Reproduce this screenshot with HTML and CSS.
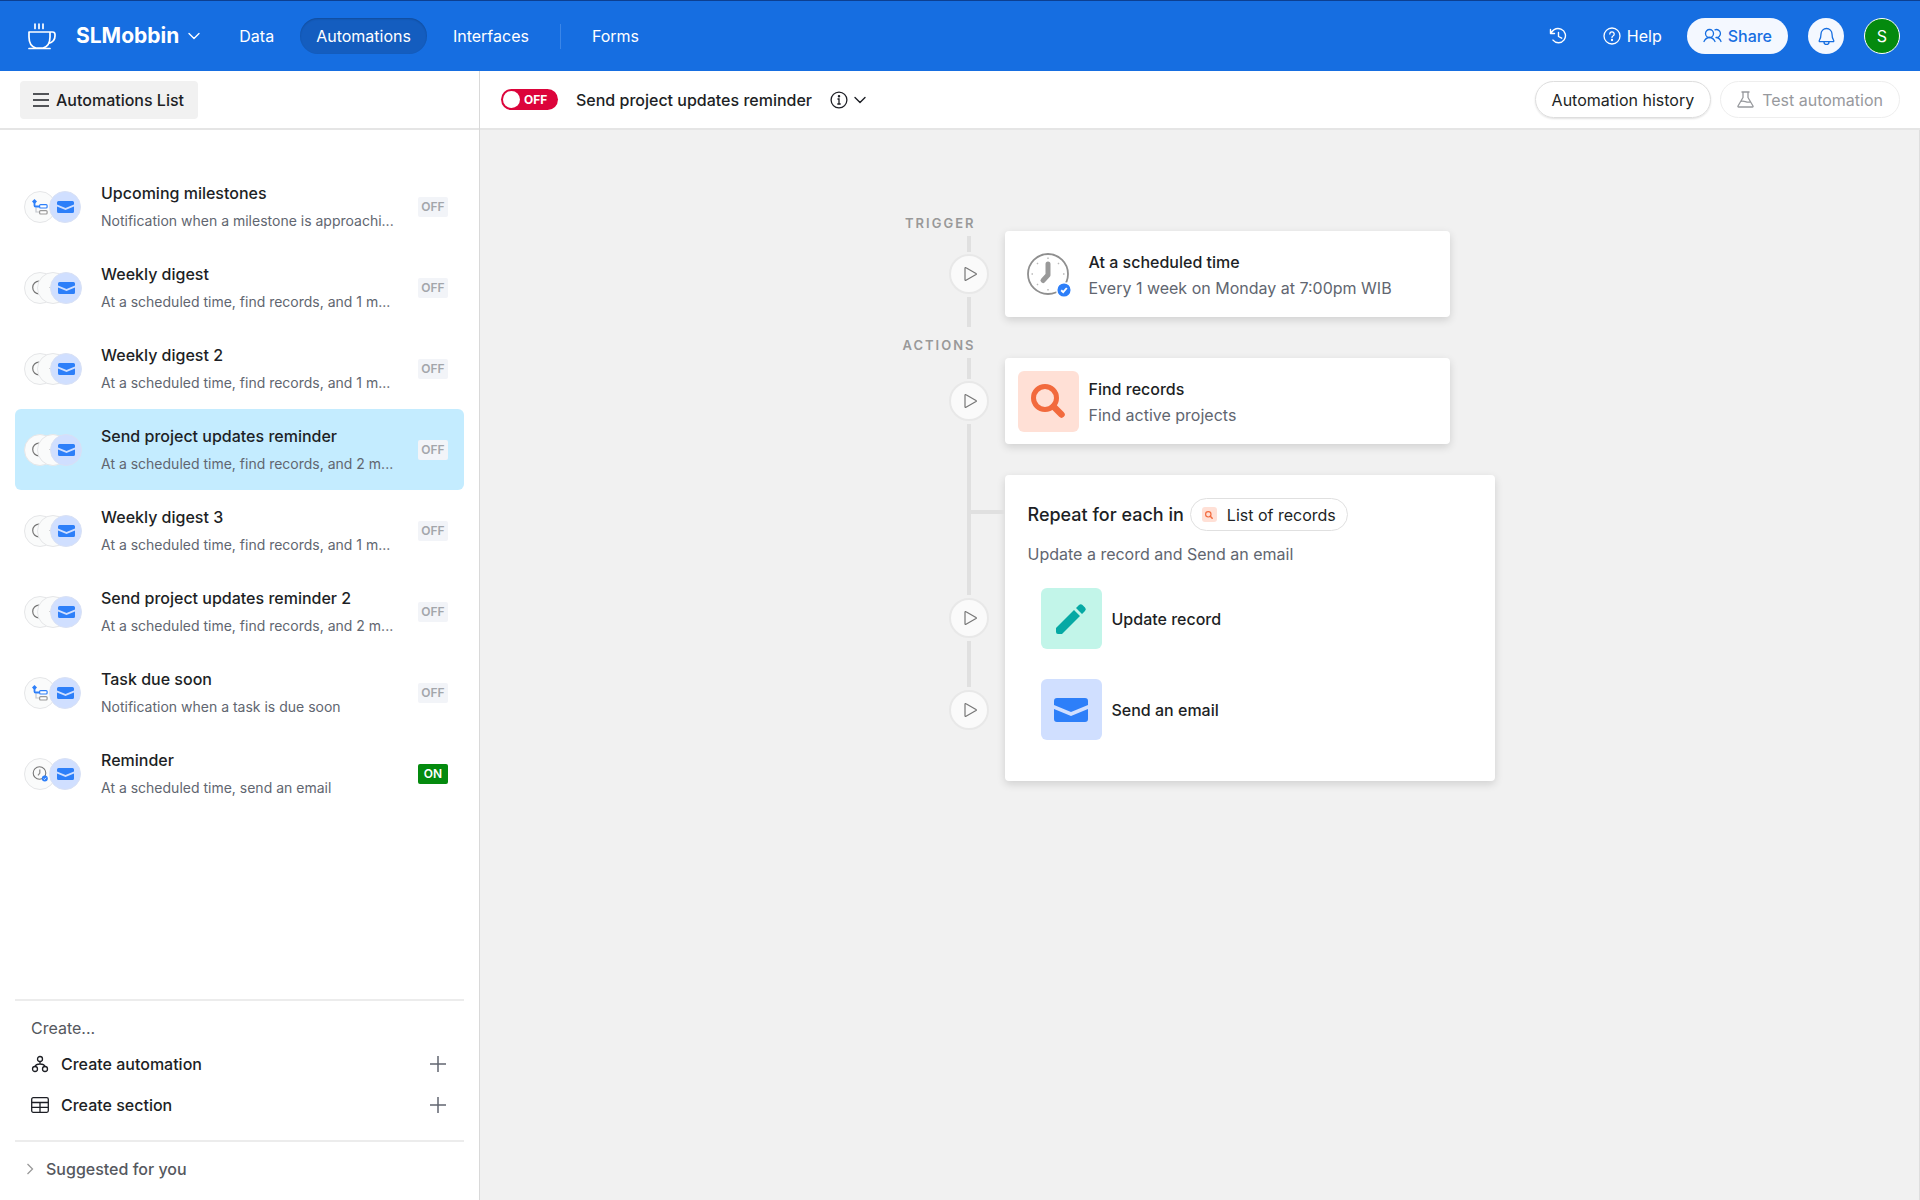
FILE: index.html
```html
<!DOCTYPE html>
<html lang="en">
<head>
    <meta charset="UTF-8">
    <meta name="viewport" content="width=device-width, initial-scale=1.0">
    <title>SLMobbin - Automations</title>
    <link rel="stylesheet" href="styles.css">
</head>
<body>
    <!-- shared icons -->
    <svg class="sprite" aria-hidden="true">
        <symbol id="chevron" viewBox="0 0 12 8"><path d="M1 1.5l5 5 5-5" fill="none" stroke="currentColor" stroke-width="1.4" stroke-linecap="round" stroke-linejoin="round"/></symbol>
        <symbol id="mail" viewBox="0 0 34 24"><path d="M3 0h28a3 3 0 0 1 3 3v4l-17 7L0 7V3a3 3 0 0 1 3-3zM0 11l17 7 17-7v10a3 3 0 0 1-3 3H3a3 3 0 0 1-3-3z" fill="currentColor"/></symbol>
        <symbol id="search" viewBox="0 0 34 34"><circle cx="14" cy="14" r="11.5" fill="none" stroke="currentColor" stroke-width="5"/><path d="M22.5 22.5l8 8" stroke="currentColor" stroke-width="6.5" stroke-linecap="round"/></symbol>
        <symbol id="tree" viewBox="0 0 16 16"><path d="M4 8.5V13h3" fill="none" stroke="#c4c7cd" stroke-width="1.2"/><path d="M2.5 3v3.5a1 1 0 0 0 1 1H7" fill="none" stroke="#2d7ff9" stroke-width="1.8"/><path d="M2.5 0L5 2.500 2.500 5 0 2.500z" fill="#2d7ff9"/><rect x="7.600" y="5.600" width="7.500" height="3.400" rx="1" fill="#fff" stroke="#2d7ff9" stroke-width="1.2"/><rect x="7.600" y="11.600" width="7.500" height="3.400" rx="1" fill="#fff" stroke="#999" stroke-width="1.2"/></symbol>
        <symbol id="clock-part" viewBox="0 0 16 16"><circle cx="7" cy="7.500" r="6.300" fill="none" stroke="#777" stroke-width="1.2"/></symbol>
        <symbol id="clock-small" viewBox="0 0 16 16"><circle cx="7.500" cy="7" r="6.300" fill="none" stroke="#777" stroke-width="1.1"/><path d="M7.800 3.500V7L6 9.300" fill="none" stroke="#888" stroke-width="1.2"/><circle cx="12.800" cy="12.600" r="3" fill="#2d7ff9"/><path d="M11.600 12.700l.9.8 1.500-1.700" fill="none" stroke="#fff" stroke-width=".8"/></symbol>
        <symbol id="play" viewBox="0 0 14 16"><path d="M1 2.200v11.600c0 .5.500.8 1 .5l10-5.700c.5-.3.500-.9 0-1.200L2 1.700c-.5-.3-1 0-1 .5z" fill="none" stroke="currentColor" stroke-width="1.2"/></symbol>
        <symbol id="plus" viewBox="0 0 16 16"><path d="M8 0v16M0 8h16" stroke="currentColor" stroke-width="1.5"/></symbol>
    </svg>

    <header class="topbar">
        <svg class="logo" viewBox="0 0 29 27" width="29" height="27"><g fill="none" stroke="currentColor" stroke-width="1.7" stroke-linecap="round" stroke-linejoin="round"><path d="M8 1v4.500M12 1v4.500M16 1v4.500M2 25.500h21M2 9h21v5c0 6-3 10-7 11H9C5 24 2 20 2 14zM23 9h2.500a2.500 2.500 0 0 1 2.500 2.500v1.500c0 4-3 6.500-6.500 7.500"/></g></svg>
        <button class="base-name">SLMobbin <svg width="12" height="8"><use href="#chevron"/></svg></button>
        <nav class="main-nav">
            <a href="#">Data</a>
            <a href="#" class="active">Automations</a>
            <a href="#">Interfaces</a>
            <span class="nav-divider"></span>
            <a href="#">Forms</a>
        </nav>
        <div class="top-actions">
            <button class="top-button" aria-label="History"><svg width="18" height="18" viewBox="0 0 18 18" fill="none" stroke="currentColor" stroke-width="1.4" stroke-linecap="round" stroke-linejoin="round"><path d="M1.500 2.500v4h4M1.800 6.200C5 1.500 9 1 12 2.200a7 7 0 1 1-8 10.900M9.500 5.500v4l3.200 1.700"/></svg></button>
            <button class="top-button help"><svg width="18" height="18" viewBox="0 0 18 18" fill="none" stroke="currentColor" stroke-width="1.3" stroke-linecap="round"><circle cx="9" cy="9" r="8"/><path d="M6.800 7a2.200 2.200 0 1 1 3.500 1.800c-.8.500-1.300.8-1.300 1.700"/><circle cx="9" cy="13" r=".5" fill="currentColor"/></svg> Help</button>
            <button class="share"><svg width="19" height="16" viewBox="0 0 19 16" fill="none" stroke="currentColor" stroke-width="1.3" stroke-linecap="round" stroke-linejoin="round"><circle cx="6.500" cy="5.500" r="4"/><path d="M1 13.500c1.200-2.500 3.200-4 5.500-4s4.300 1.500 5.500 4M12 1.800a4 4 0 1 1 1 7.700c2.300 0 4 1.500 5 4"/></svg> Share</button>
            <button class="bell" aria-label="Notifications"><svg width="17" height="19" viewBox="0 0 17 19" fill="none" stroke="currentColor" stroke-width="1.3" stroke-linejoin="round" stroke-linecap="round"><path d="M3 7a5.500 5.500 0 0 1 11 0c0 4 1 5.500 1.700 6.500.3.600 0 1.200-.7 1.200H2c-.7 0-1-.6-.7-1.200C2 12.500 3 11 3 7zM6 14.900a2.500 2.500 0 0 0 5 0"/></svg></button>
            <button class="avatar">S</button>
        </div>
    </header>

    <div class="workspace">
        <aside class="sidebar">
            <div class="subbar">
                <button class="list-button"><svg width="16" height="14" viewBox="0 0 16 14"><path d="M0 1h16M0 7h16M0 13h16" stroke="currentColor" stroke-width="1.5"/></svg> Automations List</button>
            </div>
            <div class="automations">
                <a href="#" class="automation">
                    <span class="icons"><span class="bubble"><svg width="16" height="16"><use href="#tree"/></svg></span><span class="bubble mail"><svg width="17" height="12"><use href="#mail"/></svg></span></span>
                    <span class="info"><strong>Upcoming milestones</strong><small>Notification when a milestone is approachi...</small></span>
                    <span class="badge">OFF</span>
                </a>
                <a href="#" class="automation triple">
                    <span class="icons"><span class="bubble"><svg width="16" height="16"><use href="#clock-part"/></svg></span><span class="bubble dot"></span><span class="bubble mail"><svg width="17" height="12"><use href="#mail"/></svg></span></span>
                    <span class="info"><strong>Weekly digest</strong><small>At a scheduled time, find records, and 1 m...</small></span>
                    <span class="badge">OFF</span>
                </a>
                <a href="#" class="automation triple">
                    <span class="icons"><span class="bubble"><svg width="16" height="16"><use href="#clock-part"/></svg></span><span class="bubble dot"></span><span class="bubble mail"><svg width="17" height="12"><use href="#mail"/></svg></span></span>
                    <span class="info"><strong>Weekly digest 2</strong><small>At a scheduled time, find records, and 1 m...</small></span>
                    <span class="badge">OFF</span>
                </a>
                <a href="#" class="automation triple selected">
                    <span class="icons"><span class="bubble"><svg width="16" height="16"><use href="#clock-part"/></svg></span><span class="bubble dot"></span><span class="bubble mail"><svg width="17" height="12"><use href="#mail"/></svg></span></span>
                    <span class="info"><strong>Send project updates reminder</strong><small>At a scheduled time, find records, and 2 m...</small></span>
                    <span class="badge">OFF</span>
                </a>
                <a href="#" class="automation triple">
                    <span class="icons"><span class="bubble"><svg width="16" height="16"><use href="#clock-part"/></svg></span><span class="bubble dot"></span><span class="bubble mail"><svg width="17" height="12"><use href="#mail"/></svg></span></span>
                    <span class="info"><strong>Weekly digest 3</strong><small>At a scheduled time, find records, and 1 m...</small></span>
                    <span class="badge">OFF</span>
                </a>
                <a href="#" class="automation triple">
                    <span class="icons"><span class="bubble"><svg width="16" height="16"><use href="#clock-part"/></svg></span><span class="bubble dot"></span><span class="bubble mail"><svg width="17" height="12"><use href="#mail"/></svg></span></span>
                    <span class="info"><strong>Send project updates reminder 2</strong><small>At a scheduled time, find records, and 2 m...</small></span>
                    <span class="badge">OFF</span>
                </a>
                <a href="#" class="automation">
                    <span class="icons"><span class="bubble"><svg width="16" height="16"><use href="#tree"/></svg></span><span class="bubble mail"><svg width="17" height="12"><use href="#mail"/></svg></span></span>
                    <span class="info"><strong>Task due soon</strong><small>Notification when a task is due soon</small></span>
                    <span class="badge">OFF</span>
                </a>
                <a href="#" class="automation">
                    <span class="icons"><span class="bubble"><svg width="16" height="16"><use href="#clock-small"/></svg></span><span class="bubble mail"><svg width="17" height="12"><use href="#mail"/></svg></span></span>
                    <span class="info"><strong>Reminder</strong><small>At a scheduled time, send an email</small></span>
                    <span class="badge on">ON</span>
                </a>
            </div>
            <div class="create">
                <div class="create-title">Create...</div>
                <button class="create-row"><svg width="18" height="18" viewBox="0 0 18 18" fill="none" stroke="currentColor" stroke-width="1.3"><circle cx="9" cy="4" r="2.500"/><circle cx="4" cy="14" r="2.500"/><circle cx="14" cy="14" r="2.500"/><path d="M9 6.500V9M4 11.500C4.500 10 6 9 9 9s4.500 1 5 2.500"/></svg> Create automation <svg class="plus" width="16" height="16"><use href="#plus"/></svg></button>
                <button class="create-row"><svg width="18" height="18" viewBox="0 0 18 18" fill="none" stroke="currentColor" stroke-width="1.3"><rect x=".7" y="1.700" width="16.600" height="14.600" rx="1.500"/><path d="M.7 6.500h16.600M.7 11.400h16.600M9 6.500v9.800"/></svg> Create section <svg class="plus" width="16" height="16"><use href="#plus"/></svg></button>
            </div>
            <button class="suggested"><svg width="8" height="12" viewBox="0 0 8 12"><path d="M1.500 1l5 5-5 5" fill="none" stroke="#999" stroke-width="1.3"/></svg> Suggested for you</button>
        </aside>

        <main class="editor">
            <div class="subbar">
                <label class="toggle"><input type="checkbox" aria-label="Automation enabled"><span>OFF</span></label>
                <h1>Send project updates reminder</h1>
                <button class="title-button" aria-label="Automation details"><svg width="18" height="18" viewBox="0 0 18 18" fill="none" stroke="currentColor" stroke-width="1.3"><circle cx="9" cy="9" r="7.900"/><path d="M7.500 8H9v5M7.300 13h3.400"/><circle cx="9" cy="5.200" r=".6" fill="currentColor"/></svg><svg width="12" height="8"><use href="#chevron"/></svg></button>
                <button class="pill history">Automation history</button>
                <button class="pill" disabled><svg width="17" height="17" viewBox="0 0 17 17" fill="none" stroke="currentColor" stroke-width="1.3" stroke-linejoin="round"><path d="M4.500 1h8M6 1v5.500L1 15c-.3.600 0 1 .6 1h13.800c.6 0 .9-.4.6-1l-5-8.500V1M3.700 10.500c4-1.500 5 1.500 9.500.5"/></svg> Test automation</button>
            </div>

            <div class="canvas">
                <div class="flow">
                    <section class="stage">
                        <div class="rail">
                            <h2>Trigger</h2>
                            <span class="track stub"></span>
                            <button class="run" aria-label="Run trigger"><svg width="14" height="16"><use href="#play"/></svg></button>
                            <span class="track short"></span>
                        </div>
                        <div class="cards">
                            <article class="card step">
                                <span class="tile"><svg width="48" height="48" viewBox="0 0 48 48"><circle cx="24" cy="24" r="20" fill="#fff" stroke="#8f8f8f" stroke-width="1.8"/><path d="M24 7.500v1.500M24 39v1.500M7.500 24H9M39 24h1.500M13 13l1 1M35 13l-1 1M13 35l1-1" stroke="#bbb" stroke-width="1.5"/><path d="M24 14v11l-5 5.500" fill="none" stroke="#999" stroke-width="5" stroke-linecap="round" stroke-linejoin="round"/><circle cx="40" cy="40" r="7.300" fill="#2d7ff9" stroke="#fff" stroke-width="1.5"/><path d="M37.200 40.300l2 1.900 3.600-4.200" fill="none" stroke="#fff" stroke-width="1.9"/></svg></span>
                                <div><h3>At a scheduled time</h3><p>Every 1 week on Monday at 7:00pm WIB</p></div>
                            </article>
                        </div>
                    </section>
                    <section class="stage actions">
                        <div class="rail">
                            <h2>Actions</h2>
                            <span class="track stub"></span>
                            <button class="run" aria-label="Run find records"><svg width="14" height="16"><use href="#play"/></svg></button>
                            <span class="track long"></span>
                            <button class="run" aria-label="Run update record"><svg width="14" height="16"><use href="#play"/></svg></button>
                            <span class="track mid"></span>
                            <button class="run" aria-label="Run send an email"><svg width="14" height="16"><use href="#play"/></svg></button>
                        </div>
                        <div class="cards">
                            <article class="card step">
                                <span class="tile find"><svg width="34" height="34"><use href="#search"/></svg></span>
                                <div><h3>Find records</h3><p>Find active projects</p></div>
                            </article>
                            <article class="card repeat">
                                <div class="repeat-head"><h3>Repeat for each in</h3><span class="token"><span class="token-icon"><svg width="8" height="8"><use href="#search"/></svg></span>List of records</span></div>
                                <p>Update a record and Send an email</p>
                                <div class="substep"><span class="tile update"><svg width="32" height="32" viewBox="0 0 32 32" fill="currentColor"><path d="M1 25L19 7l6 6L7 31H3a2 2 0 0 1-2-2zM21 5l3-3a2.500 2.500 0 0 1 3.500 0L30 4.500A2.500 2.500 0 0 1 30 8l-3 3z"/></svg></span><h3>Update record</h3></div>
                                <div class="substep"><span class="tile email"><svg width="34" height="24"><use href="#mail"/></svg></span><h3>Send an email</h3></div>
                            </article>
                        </div>
                    </section>
                </div>
            </div>
        </main>
    </div>
</body>
</html>
```

FILE: styles.css
```css
* {
    box-sizing: border-box;
}

body {
    display: flex;
    flex-direction: column;
    min-height: 100vh;
    margin: 0;
    font-family: Inter, 'Liberation Sans', sans-serif;
    font-size: 16px;
    line-height: 20px;
    color: #1d1f25;
    background: #ffffff;
}

h1, h2, h3, p {
    margin: 0;
}

h1, h3 {
    font-size: 16px;
    font-weight: 500;
}

button {
    display: flex;
    align-items: center;
    padding: 0;
    border: none;
    background: none;
    font: inherit;
    color: inherit;
    cursor: pointer;
}

a {
    color: inherit;
    text-decoration: none;
}

svg {
    flex: none;
}

.sprite {
    position: absolute;
    width: 0;
    height: 0;
}

/* top bar */
.topbar {
    display: flex;
    align-items: center;
    height: 71px;
    padding: 0 20px 0 27px;
    border-top: 1px solid #0c3f91;
    background: #166ee1;
    color: #ffffff;
}

.base-name {
    gap: 9px;
    margin-left: 20px;
    font-size: 21px;
    font-weight: 700;
}

.main-nav {
    display: flex;
    align-items: center;
    margin-left: 23px;
    gap: 10px;
}

.main-nav a {
    padding: 8px 16px;
    border-radius: 18px;
}

.main-nav a.active {
    background: #145dbf;
    box-shadow: inset 0 1px 2px rgba(0, 0, 0, 0.2);
}

.nav-divider {
    width: 1px;
    height: 25px;
    margin: 0 5px;
    background: #3b86e8;
}

.top-actions {
    display: flex;
    align-items: center;
    margin-left: auto;
}

.help {
    gap: 6px;
    margin: 0 25px 0 36px;
}

.share {
    height: 36px;
    gap: 6px;
    padding: 0 16px;
    border-radius: 18px;
    background: #f4f8ff;
    color: #166ee1;
    font-weight: 500;
}

.bell, .avatar {
    justify-content: center;
    width: 36px;
    height: 36px;
    margin-left: 20px;
    border-radius: 50%;
    background: #f4f8ff;
    color: #166ee1;
}

.avatar {
    border: 1px solid #ffffff;
    background: #048a0e;
    color: #ffffff;
}

.workspace {
    display: flex;
    flex: 1;
}

.subbar {
    display: flex;
    align-items: center;
    height: 59px;
    border-bottom: 2px solid #e5e5e5;
    background: #ffffff;
}

/* sidebar */
.sidebar {
    display: flex;
    flex-direction: column;
    flex: none;
    width: 480px;
    border-right: 1px solid #d9d9d9;
}

.list-button {
    height: 38px;
    gap: 7px;
    margin-left: 20px;
    padding: 0 14px 0 13px;
    border-radius: 4px;
    background: #f1f1f1;
    font-weight: 500;
}

.automations {
    flex: 1;
    padding: 36px 15px 0;
}

.automation {
    display: flex;
    align-items: center;
    height: 81px;
    padding: 0 16px 0 9px;
    border-radius: 6px;
}

.automation.selected {
    background: #c4ecff;
}

.icons {
    display: flex;
    width: 77px;
}

.bubble {
    display: flex;
    align-items: center;
    justify-content: center;
    flex: none;
    width: 32px;
    height: 32px;
    border: 1px solid #e5e6e8;
    border-radius: 50%;
    background: #fafbfb;
}

.bubble + .bubble {
    margin-left: -7px;
}

.triple .bubble + .bubble {
    margin-left: -19px;
}

.bubble.dot::before {
    content: "";
    width: 9px;
    height: 1px;
    background: #d5d5d5;
}

.bubble.mail {
    border-color: #d9e1f5;
    background: #d0dfff;
    color: #2d7ff9;
}

.info {
    display: flex;
    flex: 1;
    flex-direction: column;
    gap: 8px;
    white-space: nowrap;
}

.info strong {
    font-weight: 500;
}

.info small {
    font-size: 14px;
    color: #616670;
}

.badge {
    width: 30px;
    border-radius: 2px;
    background: #f2f4f8;
    font-size: 12px;
    font-weight: 600;
    text-align: center;
    color: #a3a6ab;
}

.badge.on {
    background: #048a0e;
    color: #ffffff;
}

.create {
    margin: 0 15px;
    padding: 17px 16px 15px;
    border-top: 2px solid #ececec;
    border-bottom: 2px solid #ececec;
}

.create-title {
    margin-bottom: 5px;
    color: #55585e;
}

.create-row {
    width: 100%;
    height: 41px;
    gap: 12px;
    font-weight: 500;
}

.create-row .plus {
    margin-left: auto;
    margin-right: 2px;
    color: #616670;
}

.suggested {
    height: 58px;
    gap: 12px;
    padding: 0 0 4px 26px;
    font-weight: 500;
    color: #55585e;
}

/* editor */
.editor {
    display: flex;
    flex: 1;
    flex-direction: column;
}

.editor .subbar {
    padding: 0 20px 0 21px;
}

.toggle {
    display: flex;
    align-items: center;
    width: 57px;
    height: 21px;
    gap: 4px;
    padding: 0 2px;
    border-radius: 11px;
    background: #dc043b;
    font-size: 12px;
    font-weight: 700;
    color: #ffffff;
}

.toggle input {
    appearance: none;
    width: 17px;
    height: 17px;
    margin: 0;
    border-radius: 50%;
    background: #ffffff;
}

.editor h1 {
    margin-left: 18px;
}

.title-button {
    gap: 6px;
    margin-left: 18px;
}

.pill {
    height: 37px;
    gap: 8px;
    margin-left: 9px;
    padding: 0 16px;
    border: 1px solid #dedede;
    border-radius: 19px;
    box-shadow: 0 1px 2px rgba(0, 0, 0, 0.12);
}

.pill.history {
    margin-left: auto;
}

.pill:disabled {
    border-color: #eeeeee;
    box-shadow: none;
    color: #97999d;
    cursor: default;
}

.canvas {
    flex: 1;
    padding: 83px 20px 40px;
    border-right: 1px solid #dedede;
    background: #f1f1f1;
}

.flow {
    max-width: 590px;
    margin: 0 auto;
}

.stage {
    display: flex;
}

.rail {
    display: flex;
    flex: none;
    flex-direction: column;
    align-items: flex-end;
    width: 100px;
}

.rail h2 {
    margin: 0 29px 4px 0;
    padding-top: 1px;
    font-size: 13px;
    line-height: 18px;
    font-weight: 600;
    letter-spacing: 2px;
    text-transform: uppercase;
    color: #999999;
}

.track {
    width: 4px;
    margin: 3px 34px;
    background: #e0e0e0;
}

.track.stub {
    height: 16px;
    margin: 0 34px 2px;
}

.actions .track.stub {
    height: 21px;
}

.track.short {
    height: 30px;
    margin-bottom: 8px;
}

.track.long {
    height: 171px;
}

.track.mid {
    height: 46px;
}

.run {
    justify-content: center;
    width: 40px;
    height: 40px;
    margin-right: 16px;
    padding-left: 4px;
    border: 2px solid #e8e8e8;
    border-radius: 50%;
    background: #fafafa;
    color: #777777;
}

.cards {
    flex: 1;
    padding-top: 18px;
}

.actions .cards {
    padding-top: 23px;
}

.card {
    border-radius: 4px;
    background: #ffffff;
    box-shadow: 0 3px 8px rgba(0, 0, 0, 0.14);
}

.card p {
    color: #616670;
}

.step {
    display: flex;
    align-items: center;
    gap: 10px;
    width: 445px;
    height: 86px;
    padding: 0 13px;
}

.step h3 {
    margin-top: 2px;
}

.step p {
    margin-top: 6px;
}

.tile {
    display: flex;
    align-items: center;
    justify-content: center;
    flex: none;
    width: 61px;
    height: 61px;
    border-radius: 6px;
}

.tile.find, .token-icon {
    background: #ffe0d6;
    color: #f26a3d;
}

.tile.update {
    background: #c2f5e9;
    color: #06a9a4;
}

.tile.email {
    background: #d0dfff;
    color: #2d7ff9;
}

.repeat {
    position: relative;
    min-height: 306px;
    margin-top: 31px;
    padding: 23px;
}

/* branch from the rail into the group */
.repeat::before {
    content: "";
    position: absolute;
    top: 35px;
    left: -34px;
    width: 34px;
    height: 4px;
    background: #e0e0e0;
}

.repeat-head {
    display: flex;
    align-items: center;
    gap: 6px;
    margin-bottom: 13px;
}

.repeat-head h3 {
    font-size: 18px;
}

.token {
    display: flex;
    align-items: center;
    height: 33px;
    gap: 10px;
    padding: 0 11px;
    border: 1px solid #e0e0e0;
    border-radius: 17px;
}

.token-icon {
    display: flex;
    align-items: center;
    justify-content: center;
    width: 15px;
    height: 15px;
    border-radius: 3px;
}

.substep {
    display: flex;
    align-items: center;
    gap: 10px;
    margin: 24px 0 0 13px;
}

.substep + .substep {
    margin-top: 30px;
}
```
